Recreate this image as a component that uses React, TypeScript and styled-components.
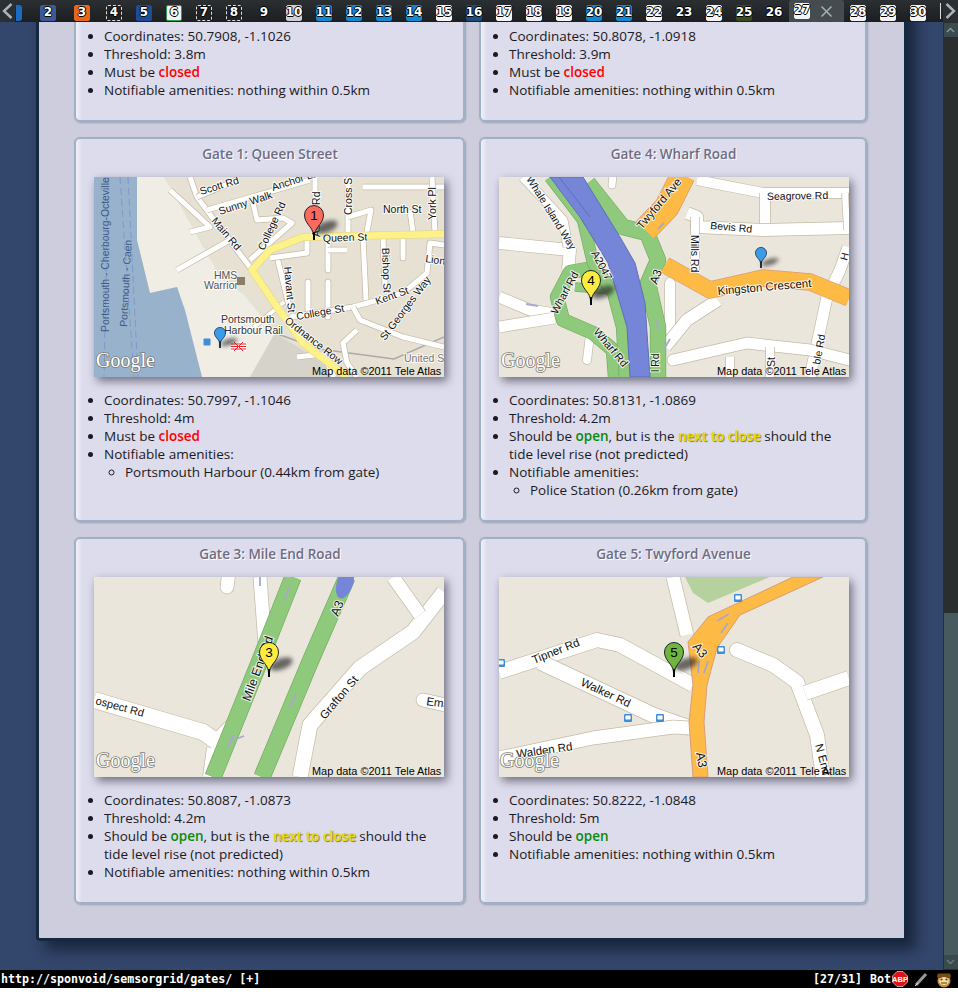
import React from "react";
import styled, { createGlobalStyle } from "styled-components";

const GlobalStyle = createGlobalStyle`
  html, body {
    margin: 0;
    padding: 0;
    background: #fff;
  }
`;

const Window = styled.div`
  width: 958px;
  height: 988px;
  display: flex;
  flex-direction: column;
  overflow: hidden;
`;

const TabBar = styled.div`
  position: relative;
  height: 22px;
  flex-shrink: 0;
  background: linear-gradient(#2b2f31, #1c1f21);
  display: flex;
  align-items: center;
  gap: 14px;
  padding-left: 16px;
  overflow: hidden;
`;

const TabArrow = styled.div<{ $side: "left" | "right" }>`
  position: absolute;
  top: 0;
  ${(p) => p.$side}: 0;
  width: 15px;
  height: 22px;
  background: #2b2f31;
  display: flex;
  align-items: center;
  justify-content: center;
`;

const TabIcon = styled.div<{ $bg: string; $edge: string; $shift: number; $dashed?: boolean }>`
  position: relative;
  width: 16px;
  height: 16px;
  flex-shrink: 0;
  box-sizing: border-box;
  margin-left: ${(p) => p.$shift}px;
  margin-top: 4px;
  padding-bottom: 2px;
  background: ${(p) => p.$bg};
  border: 1px ${(p) => (p.$dashed ? "dashed" : "solid")} ${(p) => p.$edge};
  border-radius: 2px;
  display: flex;
  align-items: center;
  justify-content: center;
  font: bold 12px "DejaVu Sans", sans-serif;
  color: #fff;
  text-shadow: -1px 0 #000, 1px 0 #000, 0 -1px #000, 0 1px #000;
`;

const TabFragment = styled.div`
  width: 6px;
  height: 16px;
  flex-shrink: 0;
  margin: 4px 4px 0 0;
  background: #1a6cc0;
  border-radius: 0 3px 3px 0;
`;

const ActiveTab = styled.div`
  width: 55px;
  height: 22px;
  flex-shrink: 0;
  box-sizing: border-box;
  margin: 0 -8px 0 -7px;
  padding: 0 0 0 5px;
  background: #454c4f;
  border-radius: 3px 3px 0 0;
  display: flex;
  align-items: center;
  gap: 10px;
  color: #a9b0b2;
`;

const ActiveIcon = styled(TabIcon)`
  margin-top: -1px;
`;

const TabEdge = styled.div`
  width: 1px;
  height: 16px;
  flex-shrink: 0;
  background: #ddd;
`;

const Middle = styled.div`
  flex: 1;
  min-height: 0;
  display: flex;
`;

const Viewport = styled.div`
  flex: 1;
  min-width: 0;
  background: #33466b;
  display: flex;
  flex-direction: column;
  justify-content: flex-end;
  overflow: hidden;
  padding: 0 36px 29px 36px;
`;

const Panel = styled.div`
  flex-shrink: 0;
  box-sizing: border-box;
  background: #cdcddd;
  border: 3px solid #14293f;
  border-top: 0;
  border-radius: 0 0 4px 4px;
  box-shadow: 9px 9px 14px rgba(8, 16, 30, 0.6);
  padding: 0 36px 34px 35px;
  display: grid;
  grid-template-columns: 391px 388px;
  column-gap: 14px;
  row-gap: 15px;
`;

const Card = styled.section<{ $cut?: boolean }>`
  box-sizing: border-box;
  background: linear-gradient(90deg, #f1f1f8, #dddcec 6px);
  border: 2px solid #9fb1c4;
  border-radius: 6px;
  box-shadow: 1px 1px 2px rgba(70, 80, 110, 0.35);
  padding: ${(p) => (p.$cut ? "50px" : "6px")} 17px 21px 18px;
`;

const Title = styled.h3`
  margin: 0 0 14px;
  height: 18px;
  font: 600 13.5px/18px "Open Sans", "Noto Sans", sans-serif;
  color: #6d6d85;
  text-align: center;
  text-shadow: 1px 1px 0 #fff;
`;

const MapFrame = styled.svg`
  display: block;
  width: 350px;
  height: 200px;
  box-shadow: 3px 4px 9px rgba(20, 20, 40, 0.55);
`;

const Facts = styled.ul`
  margin: 14px 0 0;
  padding: 0 0 0 10px;
  list-style-position: outside;
  list-style-type: disc;
  font: 13.5px/18px "Open Sans", "Noto Sans", sans-serif;
  color: #1a1a22;
`;

const Fact = styled.li`
  margin: 0;
`;

const SubFacts = styled.ul`
  margin: 0;
  padding: 0 0 0 21px;
  list-style-type: circle;
`;

const Status = styled.b<{ $tone: "closed" | "open" | "next" }>`
  font-weight: 600;
  color: ${(p) =>
    p.$tone === "closed" ? "#ff0000" : p.$tone === "open" ? "#0a8a0a" : "#ecdc00"};
  text-shadow: ${(p) => (p.$tone === "next" ? "1px 1px 1px #77774a" : "none")};
`;

const Scrollbar = styled.div`
  width: 15px;
  flex-shrink: 0;
  background: #2a2e2f;
  display: flex;
  flex-direction: column;
  align-items: center;
  padding: 1px 0;
  box-sizing: border-box;
`;

const ScrollButton = styled.div`
  width: 14px;
  height: 14px;
  flex-shrink: 0;
  background: #3a4a4e;
  display: flex;
  align-items: center;
  justify-content: center;
`;

const ScrollTrack = styled.div`
  flex: 1;
  width: 100%;
  display: flex;
  flex-direction: column;
  justify-content: flex-end;
  align-items: center;
`;

const ScrollThumb = styled.div`
  width: 14px;
  height: 342px;
  background: #475a5e;
`;

const StatusBar = styled.footer`
  height: 18px;
  flex-shrink: 0;
  background: #000;
  color: #fff;
  display: flex;
  align-items: center;
  justify-content: space-between;
  padding: 0 5px 0 1px;
  font: bold 11.65px "DejaVu Sans Mono", monospace;
  white-space: pre;
`;

const StatusRight = styled.div`
  display: flex;
  align-items: center;
`;

const TabPosition = styled.span`
  margin-right: 8px;
`;

const StatusGlyphs = styled.svg`
  display: block;
  margin-left: 1px;
`;

const MapText = styled.text<{ $size?: number; $fill?: string }>`
  font-family: "Liberation Sans", Arial, sans-serif;
  font-size: ${(p) => p.$size ?? 10.5}px;
  fill: ${(p) => p.$fill ?? "#111"};
  stroke: rgba(255, 255, 255, 0.85);
  stroke-width: 2px;
  paint-order: stroke;
`;

const PlainMapText = styled(MapText)`
  stroke: none;
`;

const GoogleMark = styled.text`
  font-family: "Liberation Serif", serif;
  font-size: 20px;
  fill: #fff;
  stroke: #7d7d74;
  stroke-width: 1.6px;
  paint-order: stroke;
`;

const PinShadow = styled.ellipse`
  fill: rgba(40, 40, 40, 0.68);
  filter: blur(2px);
`;

const PinNumber = styled.text`
  font-family: "Liberation Sans", Arial, sans-serif;
  font-size: 13.5px;
  fill: #000;
  text-anchor: middle;
`;

type Pt = [number, number];

const toPath = (pts: Pt[]) => "M" + pts.map((p) => p.join(" ")).join("L");

function Road({
  pts,
  w = 10,
  fill = "#fff",
  edge = "#c5bba4",
  round,
}: {
  pts: Pt[];
  w?: number;
  fill?: string;
  edge?: string;
  round?: boolean;
}) {
  const d = toPath(pts);
  const cap = round ? "round" : "butt";
  return (
    <>
      <path d={d} fill="none" stroke={edge} strokeWidth={w + 1.4} strokeLinejoin="round" strokeLinecap={cap} />
      <path d={d} fill="none" stroke={fill} strokeWidth={w} strokeLinejoin="round" strokeLinecap={cap} />
    </>
  );
}

function Label({ x, y, r = 0, size, fill, children }: { x: number; y: number; r?: number; size?: number; fill?: string; children: string }) {
  return (
    <MapText transform={`translate(${x} ${y}) rotate(${r})`} $size={size} $fill={fill}>
      {children}
    </MapText>
  );
}

function Pin({ x, y, color, label }: { x: number; y: number; color: string; label: string }) {
  return (
    <g>
      <PinShadow cx={x + 12} cy={y - 13} rx={12} ry={5.5} transform={`rotate(-20 ${x + 12} ${y - 13})`} />
      <path
        d={`M${x} ${y}L${x - 0.8} ${y - 7}C${x - 2} ${y - 13} ${x - 9.5} ${y - 17} ${x - 9.5} ${y - 25}A9.5 9.5 0 1 1 ${x + 9.5} ${y - 25}C${x + 9.5} ${y - 17} ${x + 2} ${y - 13} ${x + 0.8} ${y - 7}Z`}
        fill={color}
        stroke="#111"
        strokeWidth={0.9}
      />
      <path d={`M${x} ${y}V${y - 8}`} stroke="#000" strokeWidth={1.8} />
      <PinNumber x={x} y={y - 20.5}>
        {label}
      </PinNumber>
    </g>
  );
}

function SmallPin({ x, y }: { x: number; y: number }) {
  return (
    <g>
      <PinShadow cx={x + 9} cy={y - 6} rx={9} ry={3} transform={`rotate(-18 ${x + 9} ${y - 6})`} />
      <path
        d={`M${x} ${y}L${x - 0.6} ${y - 6}C${x - 1.5} ${y - 9} ${x - 5.6} ${y - 11} ${x - 5.6} ${y - 15}A5.6 5.6 0 1 1 ${x + 5.6} ${y - 15}C${x + 5.6} ${y - 11} ${x + 1.5} ${y - 9} ${x + 0.6} ${y - 6}Z`}
        fill="#3a9be8"
        stroke="#123"
        strokeWidth={0.7}
      />
      <path d={`M${x} ${y}V${y - 7}`} stroke="#123" strokeWidth={1.5} />
    </g>
  );
}

function Bus({ x, y }: { x: number; y: number }) {
  return (
    <g>
      <rect x={x - 4} y={y - 4} width={8} height={8} rx={1.2} fill="#3d8ed8" />
      <rect x={x - 2.6} y={y - 2.6} width={5.2} height={4} rx={0.6} fill="#fff" />
    </g>
  );
}

function Arrow({ from, to }: { from: Pt; to: Pt }) {
  return <path d={toPath([from, to])} stroke="#a8a8cc" strokeWidth={1.8} fill="none" />;
}

function MapCredits({ logoOverRoad }: { logoOverRoad?: boolean }) {
  return (
    <>
      <GoogleMark x={logoOverRoad ? 1 : 2} y={190}>
        Google
      </GoogleMark>
      <PlainMapText x={218} y={198} $size={10.9} $fill="#000">
        Map data ©2011 Tele Atlas
      </PlainMapText>
    </>
  );
}

const QueenStreetMap = () => (
  <MapFrame viewBox="0 0 350 200">
    <rect width="350" height="200" fill="#e6e1d3" />
    <path d="M43 0V63L56 116L83 110L108 200H156L181 156L150 118L126 100L70 0Z" fill="#f0ede5" />
    <path d="M156 200L181 156L253 200Z" fill="#d6d4ca" />
    <path d="M0 0H43V63L56 116L83 110L91 133L108 200H0Z" fill="#98b2cc" />
    <path d="M14 0L10 200M26 0L40 200M34 0L44 200" stroke="#7d93cf" strokeWidth={0.9} strokeDasharray="7 4" fill="none" />
    <path d="M181 156L225 172L300 182L350 160" stroke="#aaa" strokeWidth={1.5} fill="none" />
    <Road w={5} pts={[[96, 0], [103, 20], [158, 93]]} />
    <Road w={5} pts={[[103, 20], [143, 3]]} />
    <Road w={5} pts={[[113, 33], [216, 3]]} />
    <Road w={5} pts={[[76, 13], [116, 50], [96, 55]]} />
    <Road w={5} pts={[[156, 83], [198, 46], [189, 41], [163, 43], [159, 26]]} />
    <Road w={5} pts={[[83, 93], [136, 63]]} />
    <Road w={5} pts={[[221, 0], [221, 60]]} />
    <Road w={5} pts={[[254, 0], [254, 60]]} />
    <Road w={5} pts={[[254, 40], [277, 33], [272, 60]]} />
    <Road w={5} pts={[[269, 10], [350, 10]]} />
    <Road w={5} pts={[[338, 0], [341, 56]]} />
    <Road w={5} pts={[[316, 33], [319, 56]]} />
    <Road w={5} pts={[[183, 80], [196, 133]]} />
    <Road w={5} pts={[[176, 81], [213, 76], [213, 60]]} />
    <Road w={5} round pts={[[214, 105], [214, 133]]} />
    <Road w={5} round pts={[[234, 105], [234, 140]]} />
    <Road w={5} round pts={[[234, 63], [234, 93]]} />
    <Road w={5} pts={[[234, 73], [253, 73]]} />
    <Road w={5} pts={[[269, 60], [272, 123]]} />
    <Road w={5} pts={[[289, 60], [291, 110]]} />
    <Road w={5} round pts={[[309, 60], [309, 81]]} />
    <Road w={5} pts={[[196, 140], [259, 130], [309, 116], [333, 96], [336, 66], [350, 68]]} />
    <Road w={5} pts={[[259, 130], [266, 143], [309, 160], [350, 170]]} />
    <Road w={5} pts={[[263, 153], [249, 166], [253, 186], [263, 200]]} />
    <Road w={5} pts={[[203, 180], [229, 177], [240, 200]]} />
    <Road w={4} pts={[[160, 150], [190, 125]]} />
    <Road w={6.5} fill="#fdf28a" edge="#e8d98a" pts={[[350, 57], [209, 60], [176, 73], [158, 93], [183, 130], [209, 166], [253, 200]]} />
    <PlainMapText transform="translate(15 155) rotate(-90)" $size={10.4} $fill="#3f5a86">
      Portsmouth - Cherbourg-Octeville
    </PlainMapText>
    <PlainMapText transform="translate(33 150) rotate(-87)" $size={10.4} $fill="#3f5a86">
      Portsmouth - Caen
    </PlainMapText>
    <Label x={107} y={18} r={-17}>Scott Rd</Label>
    <Label x={126} y={38} r={-18}>Sunny Walk</Label>
    <Label x={179} y={14} r={-18}>Anchor La</Label>
    <Label x={226} y={60} r={-90}>Ashby Rd</Label>
    <Label x={258} y={38} r={-90}>Cross St</Label>
    <Label x={289} y={36}>North St</Label>
    <Label x={342} y={43} r={-90}>York Pl</Label>
    <Label x={117} y={44} r={50}>Main Rd</Label>
    <Label x={170} y={74} r={-65}>College Rd</Label>
    <Label x={229} y={65} r={-2}>Queen St</Label>
    <Label x={288} y={71} r={88}>Bishop St</Label>
    <Label x={190} y={90} r={85}>Havant St</Label>
    <Label x={203} y={143} r={-10}>College St</Label>
    <Label x={283} y={128} r={-20}>Kent St</Label>
    <Label x={291} y={164} r={-53}>St Georges Way</Label>
    <Label x={331} y={85} r={8}>Lion</Label>
    <Label x={120} y={102} fill="#555">HMS</Label>
    <Label x={110} y={112} fill="#555">Warrior</Label>
    <Label x={127} y={146} fill="#333">Portsmouth</Label>
    <Label x={130} y={157} fill="#333">Harbour Rail</Label>
    <Label x={190} y={145} r={38}>Ordnance Row</Label>
    <Label x={310} y={185} fill="#777">United S</Label>
    <rect x={143} y={100} width={8} height={8} fill="#8b7d66" />
    <rect x={109.5} y={161.5} width={7} height={7} rx={1} fill="#3d8ed8" />
    <rect x={137} y={165} width={15} height={9} fill="#fff" />
    <path d="M137 167H152M137 169.5H152M137 172H152M140 165L149 174M149 165L140 174" stroke="#e8272e" strokeWidth={1} />
    <SmallPin x={126} y={171} />
    <Pin x={220} y={63} color="#fb6a5e" label="1" />
    <MapCredits />
  </MapFrame>
);

const WharfRoadMap = () => (
  <MapFrame viewBox="0 0 350 200">
    <rect width="350" height="200" fill="#ebe6dc" />
    <Road w={12} pts={[[0, 66], [71, 73], [69, 93]]} />
    <Road w={9} pts={[[24, 0], [64, 43], [69, 70]]} />
    <Road w={11} pts={[[0, 120], [31, 133], [56, 137]]} />
    <Road w={11} pts={[[0, 150], [56, 141]]} />
    <Road w={10} pts={[[198, 3], [264, 16], [350, 16]]} />
    <Road w={10} pts={[[266, 16], [266, 50]]} />
    <Road w={12} pts={[[188, 36], [198, 40], [198, 50], [264, 53], [350, 51]]} />
    <Road w={8} pts={[[196, 40], [196, 96]]} />
    <Road w={10} round pts={[[171, 106], [171, 153]]} />
    <Road w={12} pts={[[219, 123], [188, 143], [166, 170]]} />
    <Road w={11} pts={[[349, 70], [341, 93], [328, 120], [311, 200]]} />
    <Road w={11} round pts={[[174, 183], [248, 166], [311, 173], [350, 183]]} />
    <Road w={8} pts={[[231, 180], [231, 200]]} />
    <Road w={8} pts={[[271, 170], [271, 200]]} />
    <Road w={8} round pts={[[88, 183], [91, 158]]} />
    <Road w={7} round pts={[[114, -2], [113, 8]]} />
    <Road w={6} pts={[[346, 16], [348, 53]]} />
    <Road w={13} fill="#8fc97c" edge="#74ae62" pts={[[94, 91], [71, 95], [58, 120], [64, 143], [94, 156], [114, 173], [116, 200]]} />
    <Road w={8} fill="#8fc97c" edge="#74ae62" pts={[[76, 110], [114, 113]]} />
    <Road w={11} fill="#8fc97c" edge="#74ae62" pts={[[51, 0], [84, 43], [94, 86], [114, 116], [123, 150], [126, 200]]} />
    <Road w={15} fill="#8fc97c" edge="#74ae62" pts={[[89, 6], [124, 50], [148, 56], [159, 83], [149, 106], [159, 150], [159, 200]]} />
    <path d="M51 0L81 40L109 86L128 150L131 200H151L146 126L136 86L121 60L84 0Z" fill="#7585d8" stroke="#5f6eba" />
    <path d="M60 0L91 40" stroke="#5f6eba" fill="none" />
    <Road w={24} fill="#fdbb46" edge="#d89c7c" pts={[[184, -2], [168, 30], [146, 53]]} />
    <Road w={16} fill="#fdbb46" edge="#d89c7c" pts={[[166, 88], [211, 113], [264, 101], [311, 105], [350, 121]]} />
    <Arrow from={[165, 46]} to={[159, 52]} />
    <Arrow from={[27, 127]} to={[39, 129]} />
    <Arrow from={[158, 142]} to={[159, 152]} />
    <Arrow from={[171, 162]} to={[165, 172]} />
    <Label x={27} y={2} r={58}>Whale Island Way</Label>
    <Label x={143} y={53} r={-50} size={11.5}>Twyford Ave</Label>
    <Label x={158} y={108} r={-70} size={12}>A3</Label>
    <Label x={268} y={23} r={-1}>Seagrove Rd</Label>
    <Label x={211} y={52} r={5}>Bevis Rd</Label>
    <Label x={192} y={58} r={90}>Mills Rd</Label>
    <Label x={219} y={118} r={-5} size={11.5}>Kingston Crescent</Label>
    <Label x={92} y={76} r={62} size={11}>A2047</Label>
    <Label x={58} y={138} r={-62} size={11}>Wharf Rd</Label>
    <Label x={94} y={155} r={50} size={11}>Wharf Rd</Label>
    <Label x={160} y={195} r={-90}>l Rd</Label>
    <Label x={321} y={188} r={-80}>ble Rd</Label>
    <Label x={276} y={190} r={-90}>St</Label>
    <Label x={348} y={84} r={-75}>H</Label>
    <SmallPin x={262} y={91} />
    <Pin x={92} y={128} color="#fdec3f" label="4" />
    <MapCredits />
  </MapFrame>
);

const MileEndRoadMap = () => (
  <MapFrame viewBox="0 0 350 200">
    <rect width="350" height="200" fill="#ebe6dc" />
    <Road w={13} pts={[[166, 0], [171, 68]]} />
    <Road w={13} round pts={[[135, -5], [133, 10]]} />
    <Road w={16} pts={[[0, 123], [109, 155], [123, 165], [142, 146]]} />
    <Road w={12} pts={[[119, 171], [115, 200]]} />
    <Road w={15} pts={[[350, 15], [319, 55], [266, 91], [216, 148], [206, 200]]} />
    <Road w={13} pts={[[299, 0], [326, 38]]} />
    <Road w={13} round pts={[[329, 123], [352, 128]]} />
    <Road w={16} fill="#8fc97c" edge="#74ae62" pts={[[199, 0], [163, 91], [119, 200]]} />
    <Road w={16} fill="#8fc97c" edge="#74ae62" pts={[[253, 0], [216, 85], [168, 200]]} />
    <ellipse cx={251} cy={6} rx={8} ry={16} transform="rotate(18 251 6)" fill="#7585d8" />
    <Arrow from={[191, 22]} to={[195, 10]} />
    <Arrow from={[137, 164]} to={[150, 159]} />
    <Arrow from={[134, 170]} to={[140, 158]} />
    <Arrow from={[196, 130]} to={[202, 117]} />
    <Arrow from={[166, 0]} to={[166, 9]} />
    <Label x={1} y={127} r={15} size={11}>ospect Rd</Label>
    <Label x={156} y={125} r={-70} size={12.5}>Mile End Rd</Label>
    <Label x={244} y={40} r={-67} size={12.5}>A3</Label>
    <Label x={231} y={143} r={-50} size={11.5}>Grafton St</Label>
    <Label x={332} y={128} r={8} size={11.5}>Ema</Label>
    <Pin x={175} y={100} color="#fdec3f" label="3" />
    <MapCredits />
  </MapFrame>
);

const TwyfordAvenueMap = () => (
  <MapFrame viewBox="0 0 350 200">
    <rect width="350" height="200" fill="#ebe6dc" />
    <path d="M186 0H271L209 26L194 16Z" fill="#b5d29e" />
    <Road w={13} pts={[[174, 0], [188, 58]]} />
    <Road w={14} pts={[[0, 95], [98, 63], [121, 68], [194, 108]]} />
    <Road w={15} pts={[[41, 85], [154, 138], [191, 151]]} />
    <Road w={13} pts={[[0, 181], [94, 161], [174, 150], [191, 151]]} />
    <Road w={14} round pts={[[238, 73], [274, 88], [298, 105], [318, 158], [324, 200]]} />
    <Road w={14} pts={[[306, 116], [350, 101]]} />
    <path
      d="M294 0L209 40L189 65L194 108L190 145L194 200H209L205 145L208 108L218 71L241 38L324 0Z"
      fill="#fdbb46"
      stroke="#d89c7c"
      strokeWidth={1}
    />
    <Arrow from={[230, 37]} to={[218, 44]} />
    <Arrow from={[229, 46]} to={[222, 56]} />
    <Arrow from={[200, 84]} to={[199, 96]} />
    <Arrow from={[209, 84]} to={[205, 96]} />
    <Bus x={239} y={21} />
    <Bus x={222} y={73} />
    <Bus x={129} y={141} />
    <Bus x={161} y={141} />
    <Bus x={2} y={86} />
    <Label x={35} y={87} r={-22} size={11.5}>Tipner Rd</Label>
    <Label x={81} y={108} r={25} size={11.5}>Walker Rd</Label>
    <Label x={18} y={181} r={-8} size={11.5}>Walden Rd</Label>
    <Label x={193} y={70} r={50} size={12.5}>A3</Label>
    <Label x={197} y={176} r={80} size={12.5}>A3</Label>
    <Label x={316} y={168} r={75} size={11.5}>N End</Label>
    <Pin x={175} y={100} color="#6fb53f" label="5" />
    <MapCredits logoOverRoad />
  </MapFrame>
);

const NoAmenities = () => <Fact>Notifiable amenities: nothing within 0.5km</Fact>;

const Closed = () => (
  <Fact>
    Must be <Status $tone="closed">closed</Status>
  </Fact>
);

const NextToClose = () => (
  <Fact>
    Should be <Status $tone="open">open</Status>, but is the <Status $tone="next">next to close</Status> should the tide level rise (not predicted)
  </Fact>
);

type TabSpec = { n: number; bg: string; edge: string; shift?: number; dashed?: boolean };

const plain = { bg: "#f4f4f4", edge: "#f4f4f4" };
const sky = { bg: "#1586d0", edge: "#1586d0" };
const clock = { bg: "#222", edge: "#ddd", dashed: true };
const none = { bg: "transparent", edge: "transparent" };

const leadTabs: TabSpec[] = [
  { n: 2, bg: "#3d5a96", edge: "#3d5a96" },
  { n: 3, bg: "#e8651a", edge: "#e8651a", shift: 4 },
  { n: 4, ...clock, shift: 2 },
  { n: 5, bg: "#1c4c96", edge: "#1c4c96" },
  { n: 6, bg: "#f4f4f4", edge: "#2e9e50" },
  { n: 7, ...clock },
  { n: 8, ...clock },
  { n: 9, ...none },
  { n: 10, bg: "#cfcfd4", edge: "#cfcfd4" },
  { n: 11, ...sky },
  { n: 12, ...sky },
  { n: 13, ...sky },
  { n: 14, ...sky },
  { n: 15, ...plain },
  { n: 16, bg: "#1c4c7e", edge: "#1c4c7e" },
  { n: 17, ...plain },
  { n: 18, ...plain },
  { n: 19, ...plain },
  { n: 20, ...sky },
  { n: 21, ...sky },
  { n: 22, ...plain },
  { n: 23, ...none },
  { n: 24, ...plain },
  { n: 25, bg: "#3c4a22", edge: "#3c4a22" },
  { n: 26, ...none },
];

const trailTabs: TabSpec[] = [
  { n: 28, ...plain },
  { n: 29, ...plain },
  { n: 30, ...plain },
];

const renderTab = (t: TabSpec) => (
  <TabIcon key={t.n} $bg={t.bg} $edge={t.edge} $shift={t.shift ?? 0} $dashed={t.dashed}>
    {t.n}
  </TabIcon>
);

export default function App() {
  return (
    <>
      <GlobalStyle />
      <Window>
        <TabBar>
          <TabFragment />
          {leadTabs.map(renderTab)}
          <ActiveTab>
            <ActiveIcon $bg="#f4f4f4" $edge="#f4f4f4" $shift={0}>
              27
            </ActiveIcon>
            <svg width="13" height="13" viewBox="0 0 13 13">
              <path d="M1.5 1.5L11.5 11.5M11.5 1.5L1.5 11.5" stroke="currentColor" strokeWidth="1.5" />
            </svg>
          </ActiveTab>
          {trailTabs.map(renderTab)}
          <TabEdge />
          <TabArrow $side="left">
            <svg width="11" height="16" viewBox="0 0 11 16">
              <path d="M9.5 1L2 8L9.5 15" fill="none" stroke="#a9b4bc" strokeWidth="2.4" />
            </svg>
          </TabArrow>
          <TabArrow $side="right">
            <svg width="11" height="16" viewBox="0 0 11 16">
              <path d="M1.5 1L9 8L1.5 15" fill="none" stroke="#a9b4bc" strokeWidth="2.4" />
            </svg>
          </TabArrow>
        </TabBar>
        <Middle>
          <Viewport>
            <Panel>
              <Card $cut>
                <Facts>
                  <Fact>Coordinates: 50.7908, -1.1026</Fact>
                  <Fact>Threshold: 3.8m</Fact>
                  <Closed />
                  <NoAmenities />
                </Facts>
              </Card>
              <Card $cut>
                <Facts>
                  <Fact>Coordinates: 50.8078, -1.0918</Fact>
                  <Fact>Threshold: 3.9m</Fact>
                  <Closed />
                  <NoAmenities />
                </Facts>
              </Card>
              <Card>
                <Title>Gate 1: Queen Street</Title>
                <QueenStreetMap />
                <Facts>
                  <Fact>Coordinates: 50.7997, -1.1046</Fact>
                  <Fact>Threshold: 4m</Fact>
                  <Closed />
                  <Fact>
                    Notifiable amenities:
                    <SubFacts>
                      <Fact>Portsmouth Harbour (0.44km from gate)</Fact>
                    </SubFacts>
                  </Fact>
                </Facts>
              </Card>
              <Card>
                <Title>Gate 4: Wharf Road</Title>
                <WharfRoadMap />
                <Facts>
                  <Fact>Coordinates: 50.8131, -1.0869</Fact>
                  <Fact>Threshold: 4.2m</Fact>
                  <NextToClose />
                  <Fact>
                    Notifiable amenities:
                    <SubFacts>
                      <Fact>Police Station (0.26km from gate)</Fact>
                    </SubFacts>
                  </Fact>
                </Facts>
              </Card>
              <Card>
                <Title>Gate 3: Mile End Road</Title>
                <MileEndRoadMap />
                <Facts>
                  <Fact>Coordinates: 50.8087, -1.0873</Fact>
                  <Fact>Threshold: 4.2m</Fact>
                  <NextToClose />
                  <NoAmenities />
                </Facts>
              </Card>
              <Card>
                <Title>Gate 5: Twyford Avenue</Title>
                <TwyfordAvenueMap />
                <Facts>
                  <Fact>Coordinates: 50.8222, -1.0848</Fact>
                  <Fact>Threshold: 5m</Fact>
                  <Fact>
                    Should be <Status $tone="open">open</Status>
                  </Fact>
                  <NoAmenities />
                </Facts>
              </Card>
            </Panel>
          </Viewport>
          <Scrollbar>
            <ScrollButton>
              <svg width="9" height="6" viewBox="0 0 9 6">
                <path d="M1 5L4.5 1.5L8 5" fill="none" stroke="#8a9a9e" strokeWidth="1.4" />
              </svg>
            </ScrollButton>
            <ScrollTrack>
              <ScrollThumb />
            </ScrollTrack>
            <ScrollButton>
              <svg width="9" height="6" viewBox="0 0 9 6">
                <path d="M1 1L4.5 4.5L8 1" fill="none" stroke="#6a7a7e" strokeWidth="1.4" />
              </svg>
            </ScrollButton>
          </Scrollbar>
        </Middle>
        <StatusBar>
          <span>http://sponvoid/semsorgrid/gates/ [+]</span>
          <StatusRight>
            <TabPosition>[27/31]</TabPosition>
            <span>Bot</span>
            <StatusGlyphs width="61" height="17" viewBox="0 0 61 17">
              <path d="M5 0.5H11L15.5 5V11L11 15.5H5L0.5 11V5Z" fill="#e0101a" stroke="#fff" strokeWidth="0.6" />
              <text x="8" y="11" textAnchor="middle" fontFamily="Liberation Sans" fontSize="7.5" fontWeight="bold" fill="#fff">
                ABP
              </text>
              <path d="M24 14L34 3" stroke="#999" strokeWidth="3" />
              <path d="M23 15L26 12" stroke="#ddd" strokeWidth="1" />
              <circle cx="52" cy="10" r="6.5" fill="#c98a3a" />
              <circle cx="47" cy="5" r="2" fill="#7a4a1a" />
              <circle cx="57" cy="5" r="2" fill="#7a4a1a" />
              <path d="M46 2.5H58V7H46Z" fill="#7a4a1a" />
              <ellipse cx="52" cy="10" rx="5" ry="4" fill="#f3d9a0" />
              <circle cx="49.5" cy="8.5" r="1.1" fill="#1c6a1c" />
              <circle cx="54.5" cy="8.5" r="1.1" fill="#1c6a1c" />
              <path d="M49 12H55" stroke="#5a3a10" strokeWidth="1" />
            </StatusGlyphs>
          </StatusRight>
        </StatusBar>
      </Window>
    </>
  );
}
